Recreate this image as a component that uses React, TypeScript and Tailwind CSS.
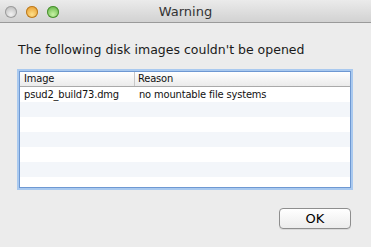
import React from "react";

const font = { fontFamily: '"DejaVu Sans", "Lucida Grande", Verdana, sans-serif' };
const small = { fontFamily: '"DejaVu Sans Condensed", "DejaVu Sans", Verdana, sans-serif', letterSpacing: "-0.15px" };

function Light({ from, to, ring }: { from: string; to: string; ring: string }) {
  return (
    <div
      className="w-[12px] h-[12px] rounded-full"
      style={{
        background: `radial-gradient(circle at 50% 70%, ${to} 0%, ${from} 85%)`,
        boxShadow: `inset 0 0 0 1px ${ring}`,
      }}
    />
  );
}

export default function App() {
  const rows = [
    { image: "psud2_build73.dmg", reason: "no mountable file systems" },
    { image: "", reason: "" },
    { image: "", reason: "" },
    { image: "", reason: "" },
    { image: "", reason: "" },
    { image: "", reason: "" },
    { image: "", reason: "" },
  ];
  return (
    <div className="w-[371px] h-[247px] bg-[#ececec] flex flex-col overflow-hidden text-[#111]" style={font}>
      <div className="h-[23px] grid grid-cols-[1fr_auto_1fr] items-center bg-gradient-to-b from-[#ebebeb] to-[#d2d2d2] border-b border-[#9a9a9a]">
        <div className="flex items-center gap-[9px] pl-[5px] pt-[1px]">
          <Light from="#b9b9b9" to="#f2f2f2" ring="#9c9c9c" />
          <Light from="#e99a2a" to="#fde08a" ring="#b87a24" />
          <Light from="#5fb342" to="#c9f3a6" ring="#4b8e34" />
        </div>
        <div className="text-[13px] leading-[16px] text-[#333] pt-[1px]">Warning</div>
        <div />
      </div>
      <div className="flex flex-col">
        <div className="pl-[18px] pt-[19px] text-[12.5px] leading-[16px] text-[#1a1a1a]">
          The following disk images couldn't be opened
        </div>
        <div
          className="ml-[19px] mt-[13px] w-[332px] h-[117px] bg-white border border-[#6e98d2] shadow-[0_0_0_2px_#a9c9ef] overflow-hidden flex flex-col text-[11px]"
          style={small}
        >
          <div className="h-[15px] shrink-0 flex bg-gradient-to-b from-[#ffffff] to-[#ebebeb] border-b border-[#aaaaaa] leading-[14px]">
            <div className="w-[115px] pl-[4px] border-r border-[#c8c8c8]">Image</div>
            <div className="pl-[3px]">Reason</div>
          </div>
          {rows.map((r, i) => (
            <div
              key={i}
              className={`h-[15px] shrink-0 flex leading-[15px] ${i % 2 === 1 ? "bg-[#f3f6fa]" : "bg-white"}`}
            >
              <div className="w-[115px] pl-[4px]">{r.image}</div>
              <div className="pl-[4px]">{r.reason}</div>
            </div>
          ))}
        </div>
        <div className="flex justify-end pr-[20px] mt-[20px]">
          <button className="w-[72px] h-[21px] rounded-[4px] border border-[#8e8e8e] bg-gradient-to-b from-[#ffffff] to-[#ececec] text-[13px] leading-[19px] text-black shadow-[0_1px_0_rgba(0,0,0,0.08)]">
            OK
          </button>
        </div>
      </div>
    </div>
  );
}
